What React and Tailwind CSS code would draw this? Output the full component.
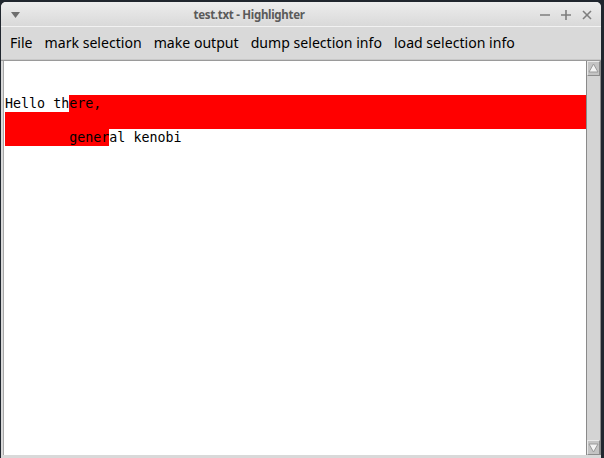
import React from 'react';

const menuItems = ['File', 'mark selection', 'make output', 'dump selection info', 'load selection info'];

function ArrowButton({ down }) {
  return (
    <div className="h-[15px] w-[13px] bg-[#c4c4c4] border-t border-l border-[#e9e9e9] border-r border-b border-r-[#8c8c8c] border-b-[#8c8c8c] flex items-center justify-center">
      <svg width="11" height="11" viewBox="0 0 11 11">
        {down ? (
          <polygon points="1,2 10,2 5.5,10" fill="#f4f4f4" stroke="#9a9a9a" strokeWidth="1" />
        ) : (
          <polygon points="5.5,1 10,9 1,9" fill="#f4f4f4" stroke="#9a9a9a" strokeWidth="1" />
        )}
      </svg>
    </div>
  );
}

export default function App() {
  return (
    <div className="w-[604px] h-[458px] bg-[#20262e] overflow-hidden pt-[2px] pl-[1px] pr-[3px]">
      <div className="h-full flex flex-col rounded-t-[5px] overflow-hidden bg-[#d9d9d9]">
        {/* title bar */}
        <div className="h-[25px] shrink-0 flex items-center px-[9px] pt-[2px] bg-gradient-to-b from-[#ededed] to-[#d9d9d9] border-b border-[#f2f2f2] font-['Noto_Sans',sans-serif]">
          <svg width="9" height="6" viewBox="0 0 9 6" className="ml-[1px]">
            <polygon points="0,0 9,0 4.5,6" fill="#6e6e6e" />
          </svg>
          <div className="flex-1 pr-[62px] text-center text-[11.5px] font-bold text-[#5a5a5a] tracking-[-0.3px]">test.txt - Highlighter</div>
          <div className="flex items-center gap-[11px] text-[#7e7e7e]">
            <svg width="10" height="10" viewBox="0 0 10 10"><line x1="0" y1="5" x2="10" y2="5" stroke="currentColor" strokeWidth="1.6" /></svg>
            <svg width="10" height="10" viewBox="0 0 10 10"><line x1="0" y1="5" x2="10" y2="5" stroke="currentColor" strokeWidth="1.6" /><line x1="5" y1="0" x2="5" y2="10" stroke="currentColor" strokeWidth="1.6" /></svg>
            <svg width="10" height="10" viewBox="0 0 10 10"><line x1="1" y1="1" x2="9" y2="9" stroke="currentColor" strokeWidth="1.6" /><line x1="9" y1="1" x2="1" y2="9" stroke="currentColor" strokeWidth="1.6" /></svg>
          </div>
        </div>

        {/* menu bar */}
        <div className="h-[32px] shrink-0 flex items-center px-[3px] bg-[#d9d9d9] font-['Noto_Sans',sans-serif] text-[14.1px] text-black">
          {menuItems.map((m) => (
            <span key={m} className="px-[6px]">{m}</span>
          ))}
        </div>
        <div className="h-[1px] shrink-0 bg-[#c8c8c8]" />
        <div className="h-[1px] shrink-0 bg-[#9a9a9a]" />

        {/* text widget */}
        <div className="flex-1 flex min-h-0 border-l-[2px] border-[#d9d9d9] border-b-[3px]">
          <div className="flex-1 bg-white border-l border-[#a8a8a8] pl-[1px] pt-[34px] font-['DejaVu_Sans_Mono',monospace] text-[13.33px] leading-[17px] text-black whitespace-pre">
            <div className="flex h-[17px]">
              <span>Hello th</span>
              <span className="flex-1 bg-[#ff0000]">ere,</span>
            </div>
            <div className="h-[17px] bg-[#ff0000]" />
            <div className="flex h-[17px]">
              <span className="bg-[#ff0000]">{'        gener'}</span>
              <span>al kenobi</span>
            </div>
          </div>
          {/* scrollbar */}
          <div className="w-[15px] shrink-0 flex flex-col bg-[#d4d4d4] border-l border-[#8a8a8a] border-r border-r-[#8a8a8a]">
            <ArrowButton />
            <div className="flex-1" />
            <ArrowButton down />
          </div>
        </div>
      </div>
    </div>
  );
}
